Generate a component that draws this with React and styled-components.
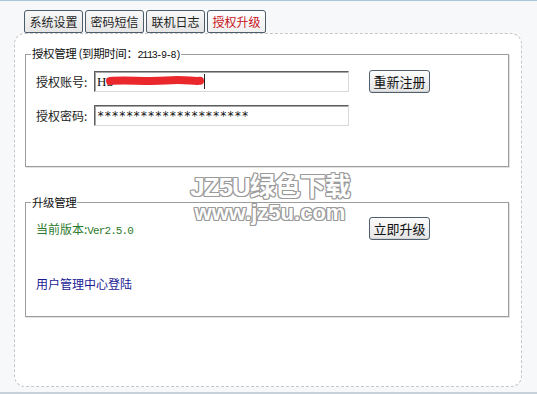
import React from 'react';
import styled, { createGlobalStyle } from 'styled-components';

const CJK = `"Noto Sans CJK SC", "Noto Sans", sans-serif`;
const MONO = `"Liberation Mono", "Noto Sans CJK SC", monospace`;

const GlobalStyle = createGlobalStyle`
  html, body {
    margin: 0;
    padding: 0;
    background: #f7f8f9;
  }
  * {
    box-sizing: border-box;
  }
`;

const tabs = [
  { label: '系统设置' },
  { label: '密码短信' },
  { label: '联机日志' },
  { label: '授权升级', active: true },
];

const App = () => {
  return (
    <>
      <GlobalStyle />
      <Page>
        <TabBar>
          {tabs.map((t) => (
            <Tab key={t.label} $active={t.active}>{t.label}</Tab>
          ))}
        </TabBar>
        <Panel>
          <Group $height={120}>
            <Legend>
              授权管理 (到期时间：<Mono $size={10} $spacing={-1.3}>2113-9-8)</Mono>
            </Legend>
            <Rows $gap={11}>
              <Row>
                <Label>授权账号:</Label>
                <InputWrap>
                  <Input defaultValue="HS" readOnly $serif />
                  <Redact viewBox="0 0 100 10" width="100" height="10">
                    <path
                      d="M4 5 C 20 3.5, 40 6, 60 4.5 S 85 5.5, 94 4.8"
                      stroke="#ea282c"
                      strokeWidth="8"
                      strokeLinecap="round"
                      fill="none"
                    />
                  </Redact>
                  <Caret />
                </InputWrap>
                <Button>重新注册</Button>
              </Row>
              <Row>
                <Label>授权密码:</Label>
                <Input defaultValue="*********************" readOnly />
              </Row>
            </Rows>
          </Group>

          <Group $height={121} $top={29} $padTop={9}>
            <Legend>升级管理</Legend>
            <Rows $gap={36}>
              <Row>
                <Version>当前版本:<Mono $size={11} $spacing={-0.9}>Ver2.5.0</Mono></Version>
                <Button>立即升级</Button>
              </Row>
              <LinkText>用户管理中心登陆</LinkText>
            </Rows>
          </Group>
        </Panel>
        <Watermark>
          <WmTitle>JZ5U绿色下载</WmTitle>
          <WmUrl>www.jz5u.com</WmUrl>
        </Watermark>
      </Page>
    </>
  );
};

export default App;

const Page = styled.div`
  position: relative;
  width: 537px;
  height: 394px;
  display: flex;
  flex-direction: column;
  padding: 9px 15px 5px 14px;
  background: #f7f8f9;
  border-top: 1px solid #a9c7da;
  border-bottom: 2px solid #c6d1d9;
  font-family: ${CJK};
  font-size: 12px;
  color: #1e1e1e;
  overflow: hidden;
`;

const TabBar = styled.div`
  display: flex;
  gap: 2px;
  padding-left: 10px;
  height: 23px;
  position: relative;
  z-index: 1;
`;

const Tab = styled.div`
  height: 23px;
  padding: 0 4.5px;
  display: flex;
  align-items: center;
  border: 1px solid #4d5c6a;
  border-radius: 3px 3px 2px 2px;
  background: ${(p) => (p.$active ? 'linear-gradient(#ffffff, #f0f0f0)' : 'linear-gradient(#f8f8f8, #e6e6e6)')};
  color: ${(p) => (p.$active ? '#c8141c' : '#1e1e1e')};
  font-size: 12px;
  line-height: 12px;
  white-space: nowrap;
`;

const Panel = styled.div`
  height: 354px;
  border: 1px dashed #c6c6c6;
  border-radius: 11px;
  background: #ffffff;
  padding: 13px 12px 0 10px;
  display: flex;
  flex-direction: column;
`;

const Group = styled.fieldset`
  margin: ${(p) => p.$top || 0}px 0 0 0;
  height: ${(p) => p.$height}px;
  padding: ${(p) => p.$padTop || 8}px 10px 0 10px;
  border: 1px solid #9c9c9c;
  box-shadow: 1px 1px 0 #e2e2e2;
  min-width: 0;
  flex-shrink: 0;
`;

const Legend = styled.legend`
  padding: 0 1px;
  margin-left: -5px;
  font-size: 11.5px;
  line-height: 12px;
  color: #111;
  white-space: nowrap;
  letter-spacing: -0.4px;
`;

const Mono = styled.span`
  font-family: ${MONO};
  font-size: ${(p) => p.$size}px;
  letter-spacing: ${(p) => p.$spacing}px;
`;

const Rows = styled.div`
  display: flex;
  flex-direction: column;
  gap: ${(p) => p.$gap}px;
`;

const Row = styled.div`
  display: flex;
  align-items: center;
  height: 23px;
`;

const Label = styled.span`
  width: 58px;
  flex-shrink: 0;
  color: #222;
  font-size: 12px;
`;

const InputWrap = styled.div`
  position: relative;
  display: flex;
`;

const Input = styled.input`
  width: 255px;
  height: 21px;
  margin: 0;
  padding: 0 2px;
  border: 1px solid;
  border-color: #5e5e5e #d9d9d9 #d9d9d9 #5e5e5e;
  box-shadow: inset 1px 1px 0 #a6a6a6;
  background: #fff;
  font-family: ${(p) => (p.$serif ? `"Liberation Serif", serif` : `"DejaVu Sans Mono", monospace`)};
  font-size: ${(p) => (p.$serif ? '13px' : '12px')};
  color: #111;
  outline: none;
`;

const Redact = styled.svg`
  position: absolute;
  left: 12px;
  top: 5px;
  overflow: visible;
`;

const Caret = styled.span`
  position: absolute;
  left: 110px;
  top: 3px;
  width: 1px;
  height: 15px;
  background: #222;
`;

const Button = styled.button`
  margin-left: 20px;
  width: 61px;
  height: 23px;
  padding: 0;
  border: 1px solid #4f5f6d;
  border-radius: 3px;
  background: linear-gradient(#fcfcfc, #e4e4e4);
  box-shadow: inset 0 -1px 0 #d4d4d4;
  font-family: ${CJK};
  font-size: 13px;
  color: #111;
`;

const Version = styled.span`
  width: 313px;
  color: #2c7a2c;
  font-size: 12px;
`;

const LinkText = styled.span`
  color: #1a1a96;
  font-size: 12px;
  line-height: 16px;
`;

const Watermark = styled.div`
  position: absolute;
  left: 183px;
  top: 171px;
  width: 174px;
  display: flex;
  flex-direction: column;
  align-items: center;
  pointer-events: none;
  font-family: "Liberation Sans", ${CJK};
  font-weight: bold;
  color: #fdfdfd;
  text-shadow: 1px 1px 0 #9a9a9a, -1px -1px 0 #9a9a9a, 1px -1px 0 #9a9a9a, -1px 1px 0 #9a9a9a,
    0 1px 0 #9a9a9a, 0 -1px 0 #9a9a9a, 1px 0 0 #9a9a9a, -1px 0 0 #9a9a9a;
`;

const WmTitle = styled.div`
  font-size: 26px;
  line-height: 30px;
  letter-spacing: -1px;
`;

const WmUrl = styled.div`
  font-size: 22px;
  line-height: 22px;
`;
